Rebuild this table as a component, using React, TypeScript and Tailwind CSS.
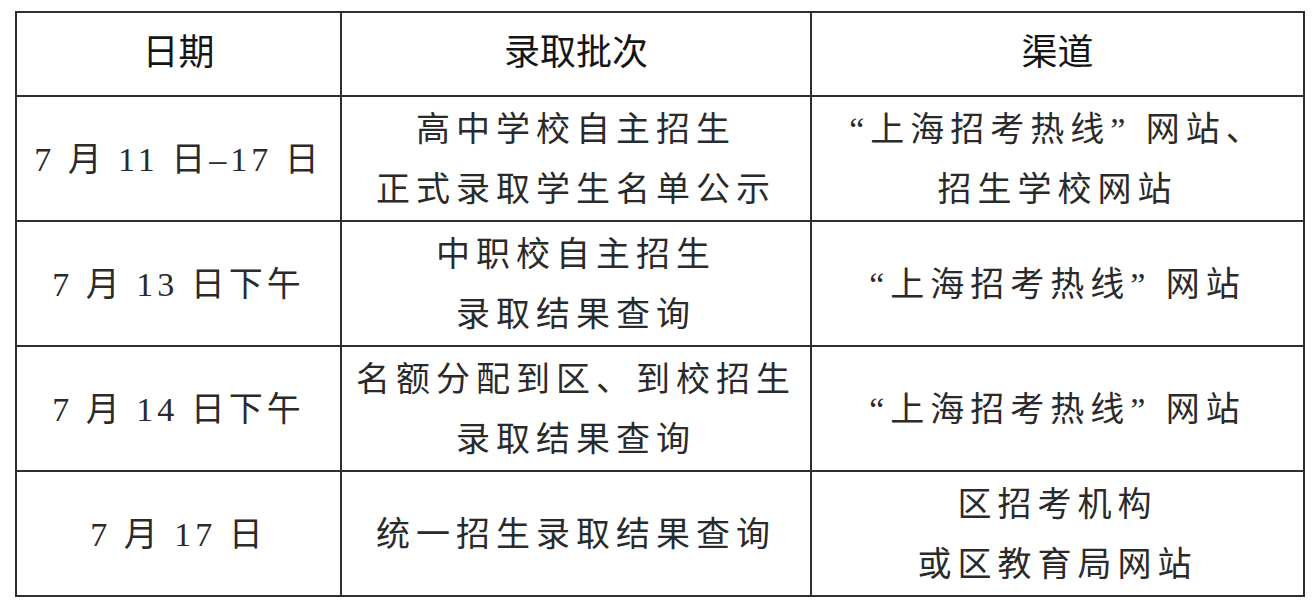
import React from 'react';

type Row = { date: string; batch: string[]; channel: string[] };

const rows: Row[] = [
  {
    date: '7 月 11 日–17 日',
    batch: ['高中学校自主招生', '正式录取学生名单公示'],
    channel: ['“上海招考热线” 网站、', '招生学校网站'],
  },
  {
    date: '7 月 13 日下午',
    batch: ['中职校自主招生', '录取结果查询'],
    channel: ['“上海招考热线” 网站'],
  },
  {
    date: '7 月 14 日下午',
    batch: ['名额分配到区、到校招生', '录取结果查询'],
    channel: ['“上海招考热线” 网站'],
  },
  {
    date: '7 月 17 日',
    batch: ['统一招生录取结果查询'],
    channel: ['区招考机构', '或区教育局网站'],
  },
];

const cell = 'border-2 border-[#2e2e2e] text-center align-middle p-0';

const App: React.FC = () => {
  return (
    <div className="w-[1315px] h-[608px] bg-white pt-[11px] pl-[15px]">
      <table className="table-fixed border-collapse w-[1288px] text-[#2a2a2a] font-['Liberation_Serif','Noto_Sans_CJK_SC',serif]">
        <colgroup>
          <col className="w-[325px]" />
          <col className="w-[470px]" />
          <col className="w-[493px]" />
        </colgroup>
        <thead>
          <tr className="h-[84px]">
            {['日期', '录取批次', '渠道'].map((h) => (
              <th
                key={h}
                className={`${cell} pb-[10px] font-['Noto_Sans_CJK_SC',sans-serif] font-normal text-[36px] text-[#151515]`}
              >
                {h}
              </th>
            ))}
          </tr>
        </thead>
        <tbody className="text-[34px] font-normal leading-[60px]">
          {rows.map((r) => (
            <tr key={r.date} className="h-[125px]">
              <td className={`${cell} pt-[3px] tracking-[4px]`}>{r.date}</td>
              <td className={`${cell} pt-[3px] tracking-[6px]`}>
                {r.batch.map((l) => (
                  <div key={l}>{l}</div>
                ))}
              </td>
              <td className={`${cell} pt-[3px] tracking-[6px]`}>
                {r.channel.map((l) => (
                  <div key={l}>{l}</div>
                ))}
              </td>
            </tr>
          ))}
        </tbody>
      </table>
    </div>
  );
};

export default App;
